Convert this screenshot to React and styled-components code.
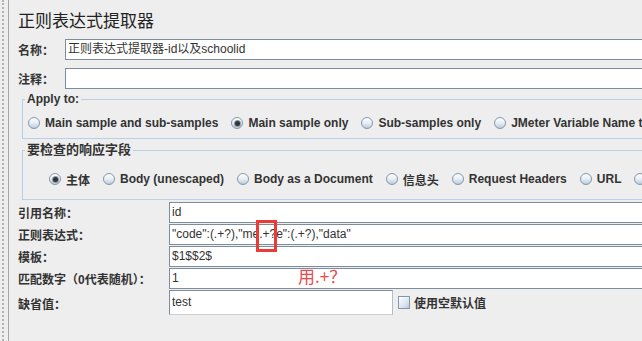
import React from 'react'
import styled, { createGlobalStyle } from 'styled-components'

const FONT = `"Liberation Sans", Arial, "Noto Sans CJK SC", sans-serif`

function Radio({ checked, children }) {
  return (
    <Option>
      <RadioDot $checked={checked} />
      <OptionText>{children}</OptionText>
    </Option>
  )
}

function App() {
  return (
    <>
      <GlobalStyle />
      <Page>
        <Gutter />
        <Panel>
          <Title>正则表达式提取器</Title>
          <TopRow>
            <TopLabel>名称：</TopLabel>
            <Field>正则表达式提取器-id以及schoolid</Field>
          </TopRow>
          <TopRow $gap={8}>
            <TopLabel>注释：</TopLabel>
            <Field />
          </TopRow>

          <Group $mt={3} $pb={6}>
            <Legend>Apply to:</Legend>
            <RadioRow $pt={8} $pl={5}>
              <Radio>Main sample and sub-samples</Radio>
              <Radio checked>Main sample only</Radio>
              <Radio>Sub-samples only</Radio>
              <Radio>JMeter Variable Name to use</Radio>
            </RadioRow>
          </Group>

          <Group $mt={4} $pb={11}>
            <Legend $size={13}>要检查的响应字段</Legend>
            <RadioRow $pt={13} $pl={26}>
              <Radio checked>主体</Radio>
              <Radio>Body (unescaped)</Radio>
              <Radio>Body as a Document</Radio>
              <Radio>信息头</Radio>
              <Radio>Request Headers</Radio>
              <Radio>URL</Radio>
              <Radio>Response Code</Radio>
            </RadioRow>
          </Group>

          <Form>
            <FormLabel>引用名称：</FormLabel>
            <Field>id</Field>
            <FormLabel>正则表达式：</FormLabel>
            <Field>"code":(.+?),"me.+?e":(.+?),"data"</Field>
            <FormLabel>模板：</FormLabel>
            <Field>$1$$2$</Field>
            <FormLabel>匹配数字（0代表随机）：</FormLabel>
            <Field>1</Field>
            <FormLabel $top>缺省值：</FormLabel>
            <DefaultRow>
              <ShortField>test</ShortField>
              <Check>
                <CheckBox />
                <CheckText>使用空默认值</CheckText>
              </Check>
            </DefaultRow>
          </Form>
        </Panel>

        <Highlight />
        <Note>用.+？</Note>
      </Page>
    </>
  )
}

const GlobalStyle = createGlobalStyle`
  html, body {
    margin: 0;
    padding: 0;
    overflow: hidden;
    background: #eeeeee;
  }
  body {
    font-family: ${FONT};
    color: #333333;
  }
`
const Page = styled.div`
  position: relative;
  display: flex;
  width: 642px;
  height: 341px;
  overflow: hidden;
  background: #eeeeee;
`
const Gutter = styled.div`
  flex: 0 0 6px;
  box-sizing: border-box;
  border-left: 2px dotted #b4b4b4;
  margin-left: 2px;
`
const Panel = styled.div`
  flex: 0 0 760px;
  border-left: 1px solid #a7a7a7;
  padding: 10px 0 0 9px;
  box-sizing: border-box;
`
const Title = styled.div`
  height: 20px;
  line-height: 20px;
  font-size: 17px;
  color: #222222;
  font-family: "Noto Sans CJK SC", ${FONT};
`
const TopRow = styled.div`
  display: flex;
  align-items: center;
  margin-top: ${p => p.$gap || 9}px;
`
const TopLabel = styled.div`
  flex: 0 0 47px;
  font-size: 12px;
  font-weight: bold;
  color: #333333;
`
const Field = styled.div`
  flex: 1;
  height: 21px;
  box-sizing: border-box;
  background: #ffffff;
  border: 1px solid #7d8d9d;
  border-right: none;
  padding: 0 2px;
  font-size: 12px;
  line-height: 19px;
  color: #333333;
  white-space: nowrap;
  overflow: hidden;
`
const Group = styled.fieldset`
  margin: ${p => p.$mt}px 0 0 4px;
  padding: 0 0 ${p => p.$pb}px 0;
  min-width: 0;
  border: 1px solid #b8cfe5;
  border-right: none;
`
const Legend = styled.legend`
  margin-left: 2px;
  padding: 0 2px;
  height: 14px;
  line-height: 14px;
  font-size: ${p => p.$size || 12}px;
  font-weight: bold;
  color: #333333;
`
const RadioRow = styled.div`
  display: flex;
  align-items: center;
  height: 18px;
  margin-top: ${p => p.$pt}px;
  padding-left: ${p => p.$pl}px;
  white-space: nowrap;
`
const Option = styled.div`
  display: flex;
  align-items: center;
  gap: 5px;
  margin-right: 13px;
`
const RadioDot = styled.span`
  position: relative;
  width: 12px;
  height: 12px;
  box-sizing: border-box;
  border-radius: 50%;
  border: 1px solid #8497aa;
  background: linear-gradient(#ffffff 0%, #e8eef5 50%, #b9cbdd 100%);
  &::after {
    content: '';
    display: ${p => (p.$checked ? 'block' : 'none')};
    position: absolute;
    left: 2.5px;
    top: 2.5px;
    width: 5px;
    height: 5px;
    border-radius: 50%;
    background: #333333;
    box-shadow: 0 0 0 1px #8e9aa6;
  }
`
const OptionText = styled.span`
  font-size: 12px;
  font-weight: bold;
  color: #333333;
`
const Form = styled.div`
  display: grid;
  grid-template-columns: 151px 1fr;
  grid-auto-rows: 21px;
  row-gap: 1px;
  margin-top: 2px;
  align-items: center;
  & > :last-child {
    align-self: start;
  }
`
const FormLabel = styled.div`
  font-size: 12px;
  font-weight: bold;
  color: #333333;
  white-space: nowrap;
  align-self: ${p => (p.$top ? 'start' : 'center')};
  padding-top: ${p => (p.$top ? '5px' : '0')};
`
const DefaultRow = styled.div`
  display: flex;
  align-items: center;
  height: 25px;
`
const ShortField = styled(Field)`
  flex: 0 0 224px;
  height: 25px;
  line-height: 23px;
  border-right: 1px solid #b4bcc4;
  border-bottom-color: #c9d0d6;
`
const Check = styled.div`
  display: flex;
  align-items: center;
  gap: 4px;
  margin-left: 5px;
`
const CheckBox = styled.span`
  width: 12px;
  height: 13px;
  box-sizing: border-box;
  border: 1px solid #8497aa;
  background: linear-gradient(135deg, #ffffff 0%, #dde6ef 60%, #b9cbdd 100%);
`
const CheckText = styled.span`
  font-size: 12px;
  font-weight: bold;
  color: #333333;
`
const Highlight = styled.div`
  position: absolute;
  left: 256px;
  top: 220px;
  width: 21px;
  height: 32px;
  box-sizing: border-box;
  border: 3px solid #ec3a36;
`
const Note = styled.div`
  position: absolute;
  left: 298px;
  top: 266px;
  font-size: 17px;
  line-height: 20px;
  color: #f0484a;
  font-family: "Noto Sans CJK SC", ${FONT};
`

export default App
